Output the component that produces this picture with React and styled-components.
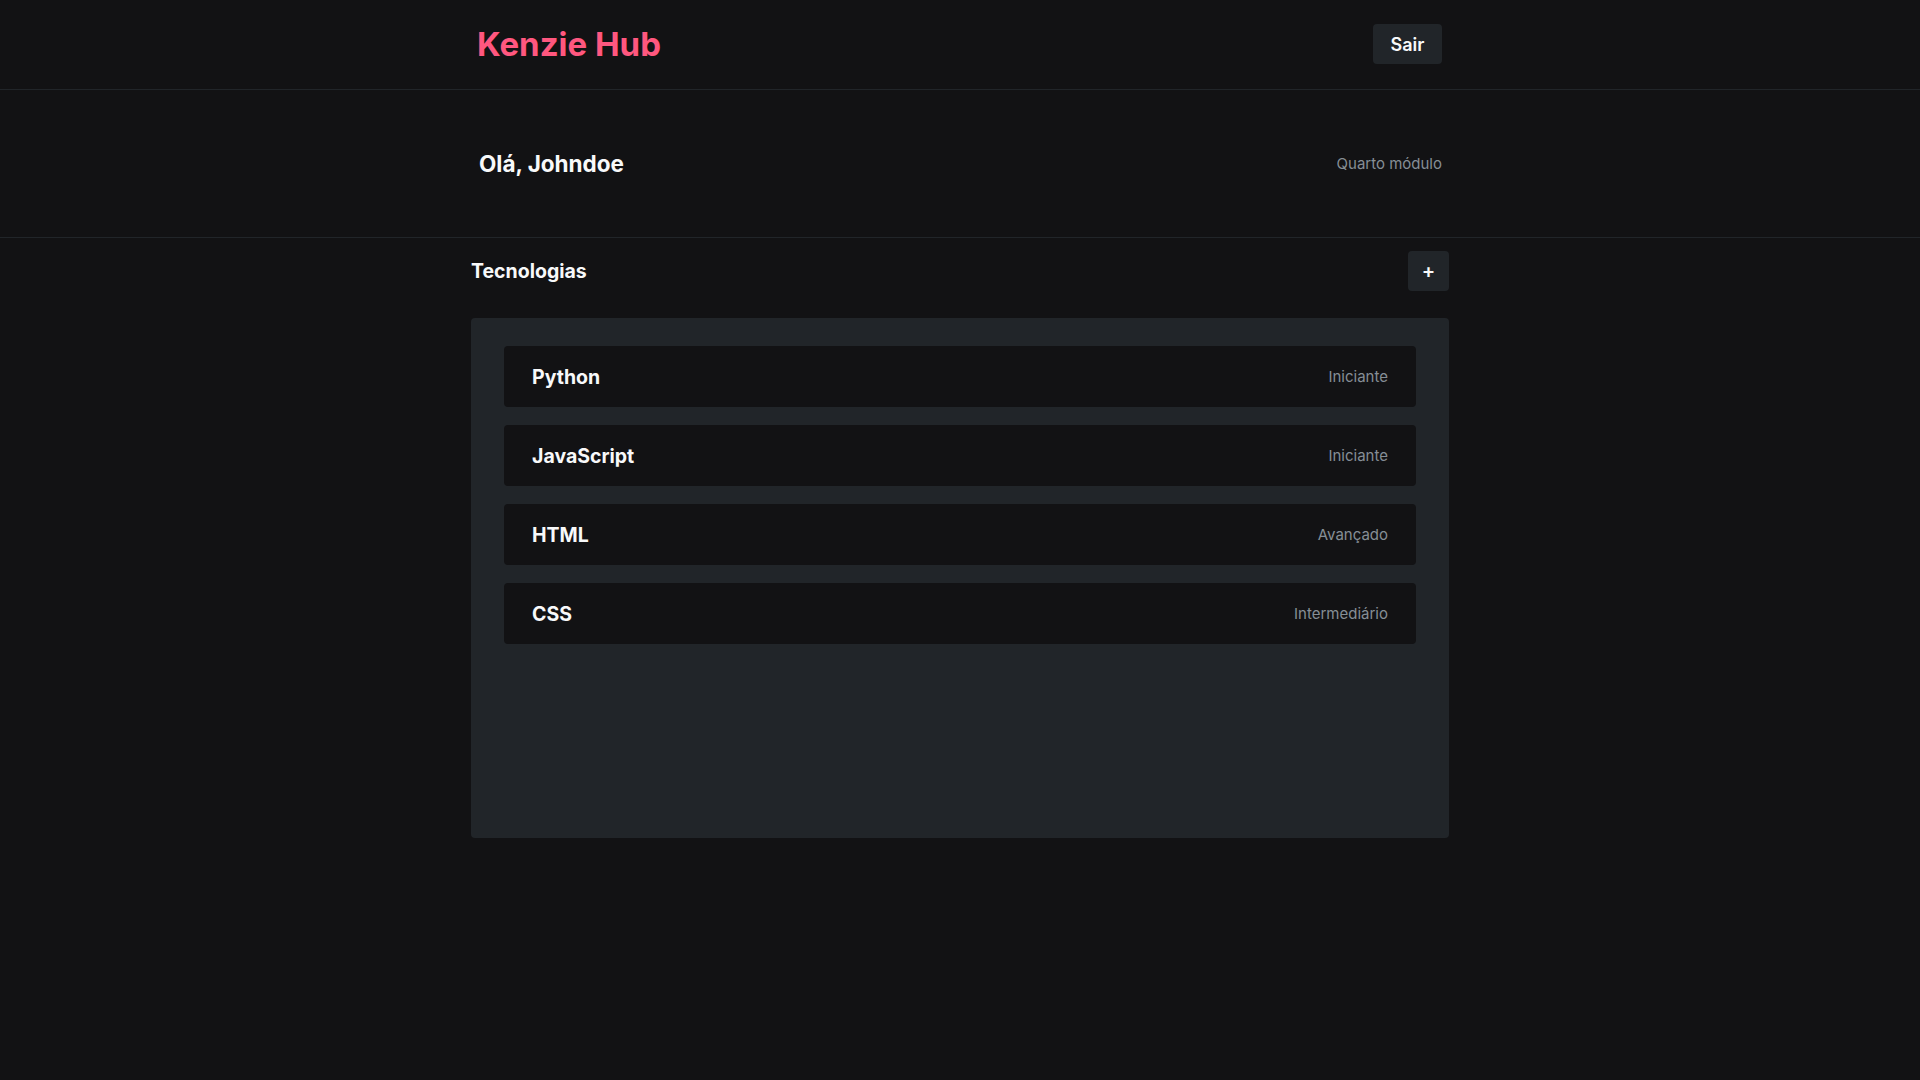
import styled, { createGlobalStyle } from 'styled-components';

const GlobalStyle = createGlobalStyle`
  * {
    box-sizing: border-box;
  }
  body {
    margin: 0;
    background: #121214;
    font-family: Inter, "Noto Sans", sans-serif;
    color: #f8f9fa;
  }
`;

const Header = styled.header`
  height: 90px;
  border-bottom: 1px solid #212529;
  display: flex;
  justify-content: center;

  & > .inner {
    width: 966px;
    display: flex;
    align-items: center;
    justify-content: space-between;
    padding-right: 1px;
    padding-bottom: 1px;
  }
`;

const Logo = styled.h1`
  margin: 0;
  color: #ff577f;
  font-size: 33px;
  font-weight: 700;
`;

const DarkButton = styled.button`
  background: #212529;
  color: #f8f9fa;
  border: none;
  border-radius: 4px;
  font-family: inherit;
  font-weight: 600;
  font-size: ${(p) => p.$size || '18px'};
  width: ${(p) => p.$width};
  height: 40px;
  display: flex;
  align-items: center;
  justify-content: center;
  cursor: pointer;
`;

const Welcome = styled.section`
  height: 148px;
  border-bottom: 1px solid #212529;
  display: flex;
  justify-content: center;

  & > .inner {
    width: 964px;
    display: flex;
    align-items: center;
    justify-content: space-between;
    padding-left: 1px;
  }
`;

const Greeting = styled.h2`
  margin: 0;
  font-size: 22.5px;
  font-weight: 700;
`;

const Muted = styled.span`
  color: #868e96;
  font-size: 15px;
`;

const Main = styled.main`
  width: 978px;
  margin: 0 auto;
  padding-top: 13px;
  display: flex;
  flex-direction: column;
  gap: 27px;
`;

const TitleRow = styled.div`
  display: flex;
  align-items: center;
  justify-content: space-between;
`;

const SectionTitle = styled.h3`
  margin: 0;
  font-size: 19.5px;
  font-weight: 700;
`;

const Panel = styled.ul`
  list-style: none;
  margin: 0;
  background: #212529;
  border-radius: 4px;
  min-height: 520px;
  padding: 28px 33px;
  display: flex;
  flex-direction: column;
  gap: 18px;
`;

const TechCard = styled.li`
  height: 61px;
  background: #121214;
  border-radius: 4px;
  padding: 0 28px;
  display: flex;
  align-items: center;
  justify-content: space-between;

  & > strong {
    font-size: 19.5px;
    font-weight: 700;
  }
`;

const techs = [
  { name: 'Python', status: 'Iniciante' },
  { name: 'JavaScript', status: 'Iniciante' },
  { name: 'HTML', status: 'Avançado' },
  { name: 'CSS', status: 'Intermediário' },
];

export default function App() {
  return (
    <>
      <GlobalStyle />
      <Header>
        <div className="inner">
          <Logo>Kenzie Hub</Logo>
          <DarkButton $width="69px">Sair</DarkButton>
        </div>
      </Header>
      <Welcome>
        <div className="inner">
          <Greeting>Olá, Johndoe</Greeting>
          <Muted>Quarto módulo</Muted>
        </div>
      </Welcome>
      <Main>
        <TitleRow>
          <SectionTitle>Tecnologias</SectionTitle>
          <DarkButton $width="41px" $size="20px">+</DarkButton>
        </TitleRow>
        <Panel>
          {techs.map((tech) => (
            <TechCard key={tech.name}>
              <strong>{tech.name}</strong>
              <Muted>{tech.status}</Muted>
            </TechCard>
          ))}
        </Panel>
      </Main>
    </>
  );
}
